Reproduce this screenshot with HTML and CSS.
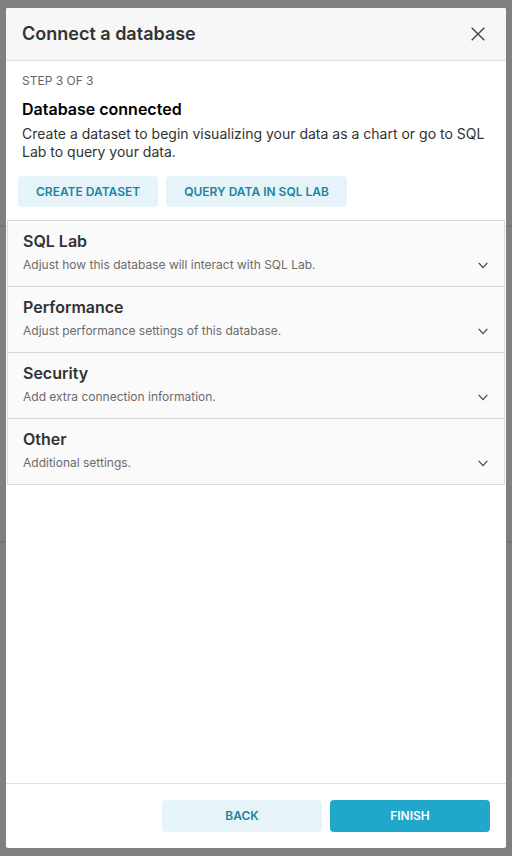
FILE: index.html
```html
<!DOCTYPE html>
<html>
<head>
<meta charset="utf-8">
<link rel="stylesheet" href="styles.css">
</head>
<body>
<div class="backdrop">
  <div class="modal">
    <div class="modal-header">
      <h1 class="modal-title">Connect a database</h1>
      <svg class="close" width="14" height="14" viewBox="0 0 14 14"><path d="M0.7 0.7 L13.3 13.3 M13.3 0.7 L0.7 13.3" stroke="#444" stroke-width="1.4" fill="none"/></svg>
    </div>
    <div class="modal-body">
      <div class="step">STEP 3 OF 3</div>
      <h2 class="heading">Database connected</h2>
      <p class="desc">Create a dataset to begin visualizing your data as a chart or go to SQL Lab to query your data.</p>
      <div class="actions">
        <button class="btn btn-secondary">CREATE DATASET</button>
        <button class="btn btn-secondary">QUERY DATA IN SQL LAB</button>
      </div>
      <div class="collapse">
        <div class="panel">
          <div class="panel-text">
            <div class="panel-title">SQL Lab</div>
            <div class="panel-sub">Adjust how this database will interact with SQL Lab.</div>
          </div>
          <svg class="chev" width="10" height="7" viewBox="0 0 10 7"><path d="M0.7 0.8 L5 5.6 L9.3 0.8" stroke="#444" stroke-width="1.2" fill="none"/></svg>
        </div>
        <div class="panel">
          <div class="panel-text">
            <div class="panel-title">Performance</div>
            <div class="panel-sub">Adjust performance settings of this database.</div>
          </div>
          <svg class="chev" width="10" height="7" viewBox="0 0 10 7"><path d="M0.7 0.8 L5 5.6 L9.3 0.8" stroke="#444" stroke-width="1.2" fill="none"/></svg>
        </div>
        <div class="panel">
          <div class="panel-text">
            <div class="panel-title">Security</div>
            <div class="panel-sub">Add extra connection information.</div>
          </div>
          <svg class="chev" width="10" height="7" viewBox="0 0 10 7"><path d="M0.7 0.8 L5 5.6 L9.3 0.8" stroke="#444" stroke-width="1.2" fill="none"/></svg>
        </div>
        <div class="panel">
          <div class="panel-text">
            <div class="panel-title">Other</div>
            <div class="panel-sub">Additional settings.</div>
          </div>
          <svg class="chev" width="10" height="7" viewBox="0 0 10 7"><path d="M0.7 0.8 L5 5.6 L9.3 0.8" stroke="#444" stroke-width="1.2" fill="none"/></svg>
        </div>
      </div>
    </div>
    <div class="modal-footer">
      <button class="btn btn-secondary btn-wide">BACK</button>
      <button class="btn btn-primary btn-wide">FINISH</button>
    </div>
  </div>
</div>
</body>
</html>
```
FILE: styles.css
```css
* { box-sizing: border-box; }
html, body { margin: 0; padding: 0; }
body {
  width: 512px;
  height: 856px;
  overflow: hidden;
  font-family: Inter, "Noto Sans", sans-serif;
  background:
    linear-gradient(to bottom, transparent 225px, #757575 225px, #757575 227px, transparent 227px),
    linear-gradient(to bottom, transparent 541px, #757575 541px, #757575 543px, transparent 543px),
    #808080;
}
.backdrop {
  padding: 8px 6px;
}
.modal {
  width: 500px;
  height: 840px;
  background: #fff;
  border-radius: 2px;
  display: flex;
  flex-direction: column;
  overflow: hidden;
}
.modal-header {
  height: 53px;
  flex: none;
  background: #f7f7f7;
  border-bottom: 1px solid #e0e0e0;
  display: flex;
  align-items: center;
  justify-content: space-between;
  padding: 0 21px 0 16px;
}
.modal-title {
  margin: 0;
  font-size: 18px;
  line-height: 24px;
  font-weight: 600;
  color: #323232;
}
.close { display: block; }
.modal-body {
  flex: 1;
  display: flex;
  flex-direction: column;
}
.step {
  margin: 12px 16px 0;
  font-size: 12px;
  line-height: 16px;
  color: #666;
}
.heading {
  margin: 10px 16px 0;
  font-size: 16px;
  line-height: 20px;
  font-weight: 600;
  color: #000;
}
.desc {
  margin: 6px 16px 0;
  font-size: 14px;
  line-height: 18px;
  color: #323232;
}
.actions {
  display: flex;
  gap: 8px;
  margin: 15px 12px 0;
}
.btn {
  font-family: Inter, "Noto Sans", sans-serif;
  font-size: 12px;
  font-weight: 600;
  border: 0;
  border-radius: 4px;
  height: 31px;
  padding: 0 18px;
  line-height: 31px;
  cursor: pointer;
}
.btn-secondary {
  background: #e6f4f9;
  color: #1a85a0;
}
.btn-primary {
  background: #20a7c9;
  color: #fff;
}
.collapse {
  margin: 13px 1px 0;
  border: 1px solid #d9d9d9;
  border-bottom: 0;
  background: #fafafa;
}
.panel {
  height: 66px;
  border-bottom: 1px solid #d9d9d9;
  display: flex;
  align-items: flex-end;
  justify-content: space-between;
  padding: 8px 16px 0 15px;
}
.panel-text {
  align-self: flex-start;
}
.panel-title {
  font-size: 16px;
  line-height: 24px;
  font-weight: 600;
  color: #323232;
}
.panel-sub {
  margin-top: 4px;
  font-size: 12px;
  line-height: 16px;
  color: #6b6b6b;
}
.chev {
  display: block;
  margin-bottom: 17px;
}
.modal-footer {
  flex: none;
  height: 65px;
  border-top: 1px solid #e0e0e0;
  display: flex;
  justify-content: flex-end;
  align-items: flex-start;
  gap: 8px;
  padding: 16px 16px 0;
}
.btn-wide {
  width: 160px;
  height: 32px;
  line-height: 30px;
}
```
